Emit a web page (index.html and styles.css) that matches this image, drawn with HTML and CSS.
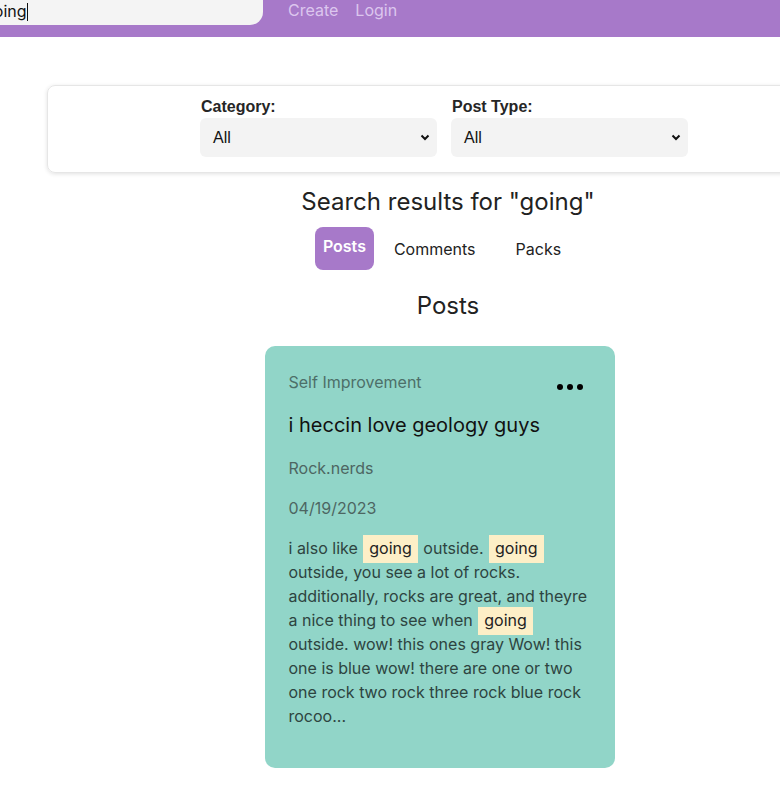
FILE: index.html
```html
<!DOCTYPE html>
<html>
<head>
<meta charset="utf-8">
<link rel="stylesheet" href="styles.css">
</head>
<body>
<header class="nav">
  <div class="search"><span class="search-text">going</span><span class="caret"></span></div>
  <a class="nav-link">Create</a>
  <a class="nav-link">Login</a>
</header>
<main class="page">
  <section class="filters">
    <div class="field">
      <label class="field-label">Category:</label>
      <div class="select"><span>All</span><svg width="10" height="7" viewBox="0 0 10 7"><path d="M1.5 1.5 L5 5 L8.5 1.5" fill="none" stroke="#111" stroke-width="2"/></svg></div>
    </div>
    <div class="field">
      <label class="field-label">Post Type:</label>
      <div class="select"><span>All</span><svg width="10" height="7" viewBox="0 0 10 7"><path d="M1.5 1.5 L5 5 L8.5 1.5" fill="none" stroke="#111" stroke-width="2"/></svg></div>
    </div>
  </section>
  <h2 class="results-title">Search results for "going"</h2>
  <nav class="tabs">
    <button class="tab tab-active">Posts</button>
    <button class="tab">Comments</button>
    <button class="tab">Packs</button>
  </nav>
  <h2 class="section-title">Posts</h2>
  <article class="card">
    <div class="card-top">
      <p class="card-category">Self Improvement</p>
      <div class="dots"><span></span><span></span><span></span></div>
    </div>
    <h3 class="card-title">i heccin love geology guys</h3>
    <p class="card-meta">Rock.nerds</p>
    <p class="card-meta">04/19/2023</p>
    <p class="card-body">i also like <mark>going</mark> outside. <mark>going</mark> outside, you see a lot of rocks. additionally, rocks are great, and theyre a nice thing to see when <mark>going</mark> outside. wow! this ones gray Wow! this one is blue wow! there are one or two one rock two rock three rock blue rock rocoo...</p>
  </article>
</main>
</body>
</html>
```

FILE: styles.css
```css
html, body {
  margin: 0;
  padding: 0;
  overflow: hidden;
  background: #fff;
  font-family: Inter, "Noto Sans", sans-serif;
  color: #222;
}

.nav {
  height: 37px;
  background: #a779c9;
  display: flex;
  align-items: flex-start;
}

.search {
  width: 300px;
  margin-left: -37px;
  height: 25px;
  background: #f4f4f4;
  border-radius: 0 0 13px 0;
  display: flex;
  align-items: flex-end;
  padding-left: 21px;
  box-sizing: border-box;
  font-size: 16px;
  color: #111;
}

.search-text {
  line-height: 20px;
  padding-bottom: 4px;
}

.caret {
  width: 1px;
  height: 18px;
  background: #111;
  margin-bottom: 4px;
}

.nav-link {
  color: #dcc6ee;
  font-size: 16px;
  line-height: 20px;
  margin-left: 25px;
}
.nav-link + .nav-link {
  margin-left: 17px;
}

.page {
  display: flex;
  flex-direction: column;
  align-items: center;
  width: 896px;
}

.filters {
  margin-top: 48px;
  margin-left: 94px;
  align-self: flex-start;
  width: 802px;
  box-sizing: border-box;
  height: 88px;
  border: 1px solid #e6e6e6;
  border-radius: 8px;
  box-shadow: 0 1px 4px rgba(0,0,0,0.12);
  display: flex;
  justify-content: center;
  gap: 14px;
  padding: 11px 8px 0 0;
  position: relative;
  left: -47px;
}

.field {
  display: flex;
  flex-direction: column;
}

.field-label {
  font-family: "Liberation Sans", Arial, sans-serif;
  font-weight: bold;
  font-size: 16px;
  line-height: 20px;
  color: #262626;
  padding-left: 1px;
}

.select {
  width: 237px;
  height: 39px;
  box-sizing: border-box;
  background: #f3f3f3;
  border-radius: 6px;
  margin-top: 1px;
  display: flex;
  align-items: center;
  justify-content: space-between;
  padding: 0 7px 0 13px;
  font-family: "Liberation Sans", Arial, sans-serif;
  font-size: 16px;
  color: #111;
}

.results-title {
  font-weight: 400;
  font-size: 24px;
  line-height: 30px;
  margin: 14px 0 10px;
  color: #222;
}

.tabs {
  display: flex;
}

.tab {
  font-family: Inter, sans-serif;
  font-size: 16px;
  border: none;
  background: none;
  color: #222;
  padding: 0 20px;
  height: 43px;
  line-height: 45px;
  cursor: pointer;
}

.tab-active {
  background: #a779c9;
  color: #fff;
  font-weight: 600;
  padding: 0 8px 4px;
  line-height: 39px;
  border-radius: 8px;
}

.section-title {
  font-weight: 400;
  font-size: 24px;
  line-height: 30px;
  margin: 21px 0 25px;
  color: #222;
}

.card {
  width: 350px;
  box-sizing: border-box;
  background: #91d5c8;
  border-radius: 10px;
  padding: 24px 24px 24px;
  margin-left: -17px;
}

.card p, .card h3 {
  margin: 0 0 16px;
}

.card-top {
  display: flex;
  justify-content: space-between;
  align-items: flex-start;
}

.card-category {
  font-size: 16px;
  line-height: 24px;
  color: #4d6f69;
}

.dots {
  display: flex;
  gap: 4px;
  margin: 14px 8px 0 0;
}
.dots span {
  width: 6px;
  height: 6px;
  background: #000;
  border-radius: 50%;
}

.card-title {
  font-size: 20px;
  font-weight: 400;
  line-height: 30px;
  color: #111;
}

.card-meta {
  font-size: 16px;
  line-height: 24px;
  color: #4d6662;
}

.card-body {
  font-size: 16px;
  line-height: 24px;
  color: #2d4440;
}

.card-body mark {
  background: #fdefc7;
  color: #222;
  padding: 3px 6px 5px;
  margin: 0 1px;
}
```
